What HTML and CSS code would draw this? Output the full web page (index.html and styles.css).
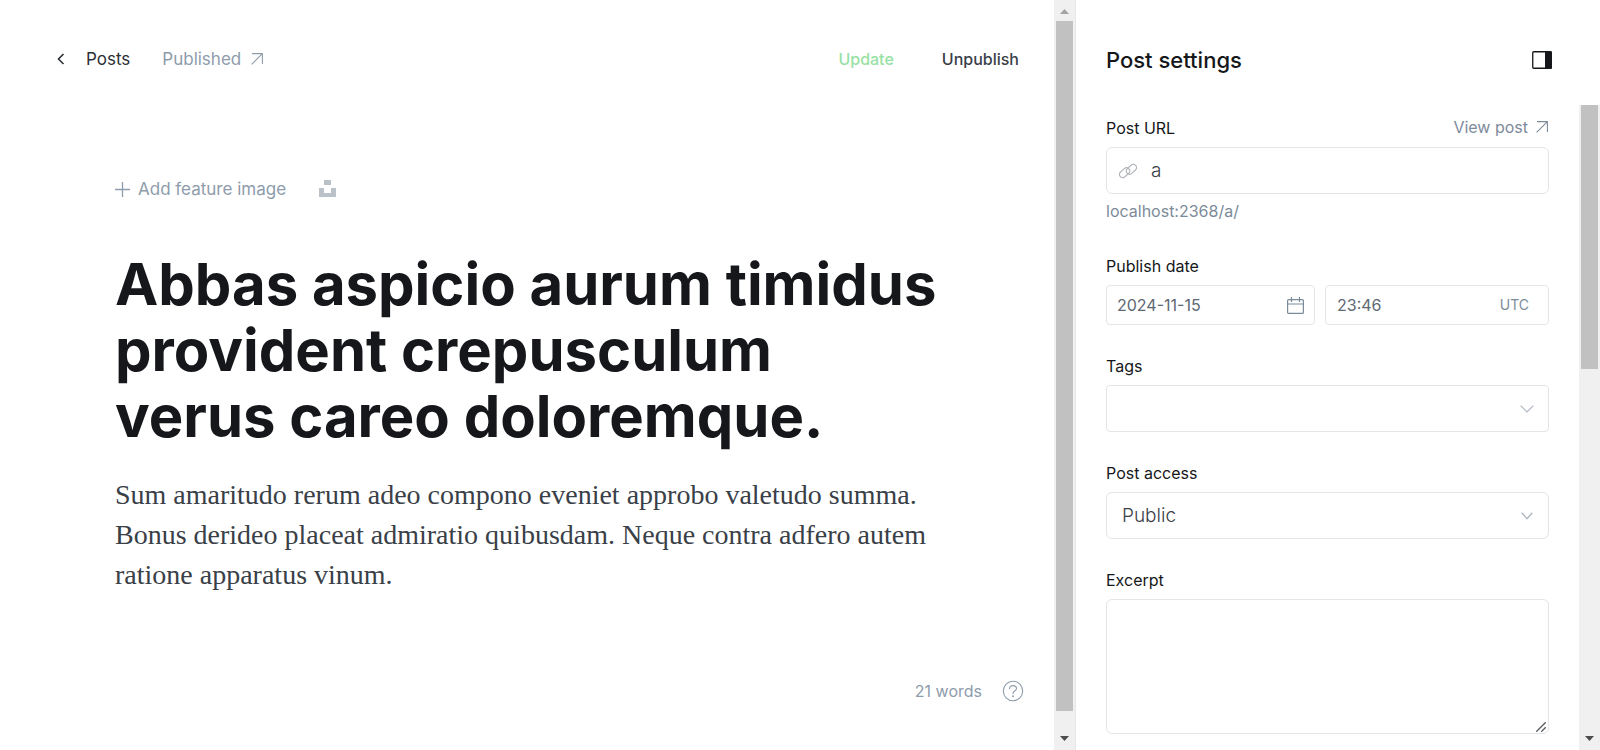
FILE: index.html
```html
<!DOCTYPE html>
<html lang="en">
<head>
<meta charset="utf-8">
<title>Post editor</title>
<link rel="stylesheet" href="styles.css">
</head>
<body>
<div class="app">
  <main class="editor">
    <header class="editor-header">
      <a class="back" href="#posts">
        <svg width="9" height="14" viewBox="0 0 9 14" fill="none" stroke="currentColor" stroke-width="1.6"><path d="M7.500 2 2.500 7l5 5"/></svg>
        Posts
      </a>
      <a class="status" href="#published">Published
        <svg width="12" height="12" viewBox="0 0 12 12" fill="none" stroke="currentColor" stroke-width="1.1"><path d="M1 .6h10.400V11M11.400.6.6 11.400"/></svg>
      </a>
      <div class="actions">
        <button class="update" type="button">Update</button>
        <button type="button">Unpublish</button>
      </div>
    </header>
    <article class="post">
      <div class="feature">
        <button class="add-image" type="button">
          <svg width="15" height="15" viewBox="0 0 15 15" fill="none" stroke="currentColor" stroke-width="1.300"><path d="M7.500 0v15M0 7.500h15"/></svg>
          Add feature image
        </button>
        <button class="unsplash" type="button" aria-label="Unsplash">
          <svg width="17" height="19" viewBox="0 0 17 19" fill="currentColor"><path d="M5 0h7v5H5zM0 8h5v5h7V8h5v9H0z"/></svg>
        </button>
      </div>
      <h1>Abbas aspicio aurum timidus provident crepusculum verus careo doloremque.</h1>
      <p>Sum amaritudo rerum adeo compono eveniet approbo valetudo summa. Bonus derideo placeat admiratio quibusdam. Neque contra adfero autem ratione apparatus vinum.</p>
    </article>
    <footer class="editor-footer">
      <span>21 words</span>
      <button type="button" aria-label="Help">
        <svg width="22" height="22" viewBox="0 0 22 22" fill="none" stroke="currentColor" stroke-width="1.100" stroke-linecap="round"><circle cx="11" cy="11" r="9.700"/><path d="M7.500 8.700C7.500 6.700 9 5.600 11 5.600s3.500 1.200 3.500 3c0 2.500-3.500 2.400-3.500 4.800"/><circle cx="11" cy="16.200" r=".4" fill="currentColor"/></svg>
      </button>
    </footer>
  </main>
  <div class="scrollbar" aria-hidden="true">
    <svg class="arrow faded" viewBox="0 0 9 5"><path d="M4.500 0 9 5H0z"/></svg>
    <div class="thumb"></div>
    <svg class="arrow" viewBox="0 0 9 5"><path d="M0 0h9L4.500 5z"/></svg>
  </div>
  <aside class="settings">
    <header class="settings-header">
      <h2>Post settings</h2>
      <button type="button" aria-label="Toggle settings">
        <svg width="20" height="18" viewBox="0 0 20 18"><rect x=".75" y=".75" width="18.500" height="16.500" rx="1" fill="none" stroke="currentColor" stroke-width="1.300"/><path d="M13 0h5.500A1.500 1.500 0 0 1 20 1.500v15a1.500 1.500 0 0 1-1.500 1.500H13z" fill="currentColor"/></svg>
      </button>
    </header>
    <div class="settings-body">
      <form class="fields">
        <div class="field">
          <div class="label-row">
            <label for="url">Post URL</label>
            <a href="#view">View post
              <svg width="12" height="12" viewBox="0 0 12 12" fill="none" stroke="currentColor" stroke-width="1.100"><path d="M1 .6h10.400V11M11.400.6.6 11.400"/></svg>
            </a>
          </div>
          <div class="box tall">
            <svg class="link-icon" width="18" height="16" viewBox="0 0 18 16" fill="none" stroke="currentColor" stroke-width="1.100"><rect x="-5.700" y="-3.200" width="11.400" height="6.400" rx="3.200" transform="translate(5.600 9.700) rotate(-42)"/><rect x="-5.700" y="-3.200" width="11.400" height="6.400" rx="3.200" transform="translate(12.400 6.300) rotate(-42)"/></svg>
            <input id="url" type="text" value="a">
          </div>
          <p class="hint">localhost:2368/a/</p>
        </div>
        <div class="field">
          <label for="date">Publish date</label>
          <div class="date-row">
            <div class="box date">
              <input id="date" type="text" value="2024-11-15">
              <svg width="17" height="17" viewBox="0 0 17 17" fill="none" stroke="currentColor" stroke-width="1.200"><rect x=".6" y="2.600" width="15.800" height="13.800" rx="1"/><path d="M.6 7h15.800M4.500 0v5M12.500 0v5"/></svg>
            </div>
            <div class="box time">
              <input type="text" value="23:46" aria-label="Publish time">
              <span>UTC</span>
            </div>
          </div>
        </div>
        <div class="field">
          <label for="tags">Tags</label>
          <div class="box tall tags">
            <input id="tags" type="text" role="combobox" aria-expanded="false">
            <svg width="14" height="8" viewBox="0 0 14 8" fill="none" stroke="currentColor" stroke-width="1.200"><path d="m.7.700 6.300 6.300L13.300.7"/></svg>
          </div>
        </div>
        <div class="field">
          <label for="access">Post access</label>
          <div class="box tall access">
            <select id="access"><option>Public</option></select>
            <svg width="12" height="8" viewBox="0 0 12 8" fill="none" stroke="currentColor" stroke-width="1.400"><path d="M.7.700 6 6.600 11.300.7"/></svg>
          </div>
        </div>
        <div class="field">
          <label for="excerpt">Excerpt</label>
          <div class="excerpt">
            <textarea id="excerpt"></textarea>
            <svg width="10" height="10" viewBox="0 0 10 10" fill="none" stroke="currentColor" stroke-width="1.300"><path d="M.3 9.700 9.700.3M5.300 9.700l4.400-4.400"/></svg>
          </div>
        </div>
      </form>
      <div class="scrollbar" aria-hidden="true">
        <div class="thumb short"></div>
        <svg class="arrow" viewBox="0 0 9 5"><path d="M0 0h9L4.500 5z"/></svg>
      </div>
    </div>
  </aside>
</div>
</body>
</html>
```
FILE: styles.css
```css
* {
  box-sizing: border-box;
}

body {
  margin: 0;
  background: #fff;
  color: #15171a;
  font: 16px/22px Inter, "Liberation Sans", sans-serif;
}

h1, h2, p {
  margin: 0;
}

a {
  color: inherit;
  text-decoration: none;
}

svg {
  display: block;
  flex: none;
}

button {
  padding: 0;
  border: 0;
  background: none;
  color: inherit;
  font: inherit;
  cursor: pointer;
}

.app {
  display: flex;
  height: 100vh;
  overflow: hidden;
}

.editor {
  display: flex;
  flex: 1;
  flex-direction: column;
  min-width: 0;
}

.editor-header {
  display: flex;
  align-items: center;
  padding: 48px 35px 0 56px;
  font-size: 17px;
}

.back,
.status,
.add-image,
.label-row a {
  display: flex;
  align-items: center;
}

.back {
  gap: 21px;
  margin-right: 32px;
  color: #2b2f35;
}

.status {
  gap: 10px;
  color: #8e9cac;
}

.actions {
  display: flex;
  gap: 48px;
  margin-left: auto;
  color: #394047;
  font-size: 16px;
}

.actions button {
  font-weight: 500;
}

.actions .update {
  color: #98e1a4;
}

.post {
  flex: 1;
  padding: 108px 112px 0 115px;
}

.feature {
  display: flex;
  align-items: center;
  gap: 33px;
  color: #8e9cac;
  font-size: 17px;
}

.add-image {
  gap: 8px;
}

.unsplash {
  color: #bac1c8;
}

h1 {
  margin-top: 51px;
  font-size: 58px;
  font-weight: 700;
  line-height: 66px;
}

.post p {
  margin-top: 26px;
  color: #394047;
  font: 28px/40px Georgia, "Liberation Serif", serif;
}

.editor-footer {
  display: flex;
  align-items: center;
  justify-content: flex-end;
  gap: 20px;
  padding: 0 30px 48px;
  color: #8e9cac;
}

.scrollbar {
  display: flex;
  flex: none;
  flex-direction: column;
  align-items: center;
  width: 21px;
  padding: 0 2px;
  background: #f0f0f0;
}

.arrow {
  width: 9px;
  height: 5px;
  margin: 8px 0 9px;
  fill: #4d4d4d;
}

.faded {
  margin: 9px 0 7px;
  fill: #a3a3a3;
}

.thumb {
  flex: 1;
  width: 17px;
  margin-bottom: 17px;
  background: #c1c1c1;
}

.short {
  flex: none;
  height: 41%;
  margin-bottom: auto;
}

.settings {
  display: flex;
  flex: none;
  flex-direction: column;
  width: 525px;
  border-left: 1px solid #e5e8eb;
}

.settings-header {
  display: flex;
  align-items: center;
  justify-content: space-between;
  height: 105px;
  padding: 15px 48px 0 30px;
}

h2 {
  font-size: 22px;
  font-weight: 500;
}

.settings-body {
  display: flex;
  flex: 1;
  min-height: 0;
}

.fields {
  display: flex;
  flex: 1;
  flex-direction: column;
  gap: 30px;
  min-width: 0;
  padding: 12px 30px 0;
}

.field {
  display: flex;
  flex-direction: column;
}

.field label {
  margin-bottom: 8px;
}

.label-row {
  display: flex;
  justify-content: space-between;
}

.label-row a {
  gap: 8px;
  height: 20px;
  padding-right: 1px;
  color: #7c8b9a;
}

.box {
  display: flex;
  align-items: center;
  min-width: 0;
  height: 40px;
  border: 1px solid #e2e6e9;
  border-radius: 4px;
}

.tall {
  height: 47px;
  border-radius: 6px;
  font-size: 19px;
  font-weight: 300;
}

.box input,
.box select {
  flex: 1;
  min-width: 0;
  height: 100%;
  padding: 0;
  border: 0;
  outline: 0;
  background: transparent;
  color: #394047;
  font: inherit;
  appearance: none;
}

.link-icon {
  margin: 0 14px 0 12px;
  color: #aeb4ba;
}

.hint {
  margin-top: 4px;
  color: #7c8b9a;
  line-height: 27px;
}

.date-row {
  display: grid;
  grid-template-columns: 209fr 224fr;
  gap: 10px;
}

.date {
  padding: 0 10px;
  color: #7c8b9a;
}

.time {
  padding: 0 19px 0 11px;
}

.box.date input,
.box.time input {
  color: #5d6873;
}

.time span {
  color: #7c8b9a;
  font-size: 14px;
}

.tags {
  padding: 0 14px 0 10px;
  border-radius: 4px;
  color: #aeb7c1;
}

.access {
  padding: 0 15px;
  color: #aeb7c1;
}

.excerpt {
  position: relative;
}

.excerpt svg {
  position: absolute;
  right: 3px;
  bottom: 2px;
  color: #55585c;
}

textarea {
  display: block;
  width: 100%;
  height: 135px;
  border: 1px solid #e2e6e9;
  border-radius: 6px;
  background: #fff;
  resize: none;
}
```
